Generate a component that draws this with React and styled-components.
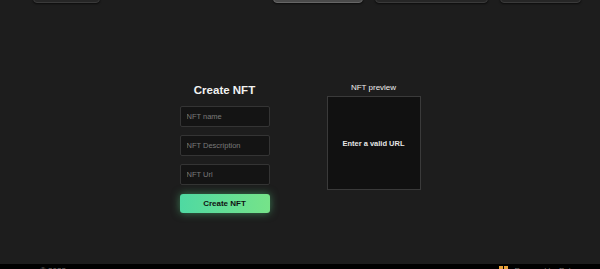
import styled, { createGlobalStyle } from 'styled-components';

const GlobalStyle = createGlobalStyle`
  html, body {
    margin: 0;
    padding: 0;
    background: #1d1d1d;
    font-family: 'Liberation Sans', Arial, sans-serif;
  }
`;

export default function App() {
  return (
    <>
      <GlobalStyle />
      <Page>
        <Header>
          <NavButton style={{ width: 67 }} />
          <NavRight>
            <NavButton light style={{ width: 90 }} />
            <NavButton style={{ width: 113 }} />
            <NavButton style={{ width: 81 }} />
          </NavRight>
        </Header>

        <Main>
          <FormColumn>
            <Title>Create NFT</Title>
            <Input placeholder="NFT name" />
            <Input placeholder="NFT Description" />
            <Input placeholder="NFT Url" />
            <CreateButton>Create NFT</CreateButton>
          </FormColumn>

          <PreviewColumn>
            <PreviewLabel>NFT preview</PreviewLabel>
            <PreviewBox>Enter a valid URL</PreviewBox>
          </PreviewColumn>
        </Main>

        <Footer>
          <FooterText>© 2023</FooterText>
          <FooterRight>
            <Logo>
              <span />
              <span />
            </Logo>
            <FooterText>Powered by Polygon</FooterText>
          </FooterRight>
        </Footer>
      </Page>
    </>
  );
}

const Page = styled.div`
  height: 100vh;
  overflow: hidden;
  display: flex;
  flex-direction: column;
`;

const Header = styled.header`
  flex-shrink: 0;
  height: 30px;
  margin-top: -27px;
  padding: 0 19px 0 33px;
  display: flex;
  justify-content: space-between;
  align-items: stretch;
`;

const NavRight = styled.div`
  display: flex;
  gap: 12px;
`;

const NavButton = styled.div`
  box-sizing: border-box;
  height: 100%;
  border-radius: 4px;
  background: ${({ light }) => (light ? '#4a4a4a' : '#262626')};
  border: 1px solid ${({ light }) => (light ? '#666' : '#3a3a3a')};
  box-shadow: 0 1px 2px rgba(0, 0, 0, 0.6);
`;

const Main = styled.main`
  flex: 1;
  padding-top: 80px;
  display: flex;
  justify-content: center;
  align-items: flex-start;
  gap: 57px;
`;

const FormColumn = styled.div`
  width: 90px;
  display: flex;
  flex-direction: column;
  gap: 8px;
`;

const Title = styled.h2`
  margin: 0;
  text-align: center;
  font-size: 11.5px;
  line-height: 15px;
  font-weight: 700;
  color: #f2f2f2;
`;

const Input = styled.input`
  box-sizing: border-box;
  width: 100%;
  height: 21px;
  padding: 0 6px;
  background: #141414;
  border: 1px solid #343434;
  border-radius: 2px;
  outline: none;
  font-family: 'Liberation Sans', Arial, sans-serif;
  font-size: 7.5px;
  color: #ddd;

  &::placeholder {
    color: #7a7a7a;
  }
`;

const CreateButton = styled.button`
  margin-top: 1px;
  height: 19px;
  border: none;
  border-radius: 3px;
  background: linear-gradient(90deg, #4fd9a2 0%, #76e389 100%);
  box-shadow: 0 0 9px rgba(90, 220, 140, 0.5);
  font-family: 'Liberation Sans', Arial, sans-serif;
  font-size: 8px;
  font-weight: 700;
  color: #111;
`;

const PreviewColumn = styled.div`
  width: 94px;
  display: flex;
  flex-direction: column;
  align-items: center;
  gap: 3px;
`;

const PreviewLabel = styled.div`
  font-size: 8px;
  line-height: 10px;
  color: #eee;
`;

const PreviewBox = styled.div`
  box-sizing: border-box;
  width: 94px;
  height: 94px;
  background: #111;
  border: 1px solid #3a3a3a;
  display: flex;
  align-items: center;
  justify-content: center;
  font-size: 7.5px;
  font-weight: 700;
  color: #e6e6e6;
`;

const Footer = styled.footer`
  flex-shrink: 0;
  height: 3px;
  background: #000;
  padding: 2px 12px 0 40px;
  display: flex;
  justify-content: space-between;
  align-items: flex-start;
  overflow: hidden;
`;

const FooterRight = styled.div`
  display: flex;
  gap: 7px;
  align-items: flex-start;
`;

const FooterText = styled.span`
  font-size: 8px;
  line-height: 10px;
  color: #777;
`;

const Logo = styled.div`
  display: flex;
  gap: 1px;

  span {
    width: 4px;
    height: 8px;
    background: #e8a23a;
  }
`;
